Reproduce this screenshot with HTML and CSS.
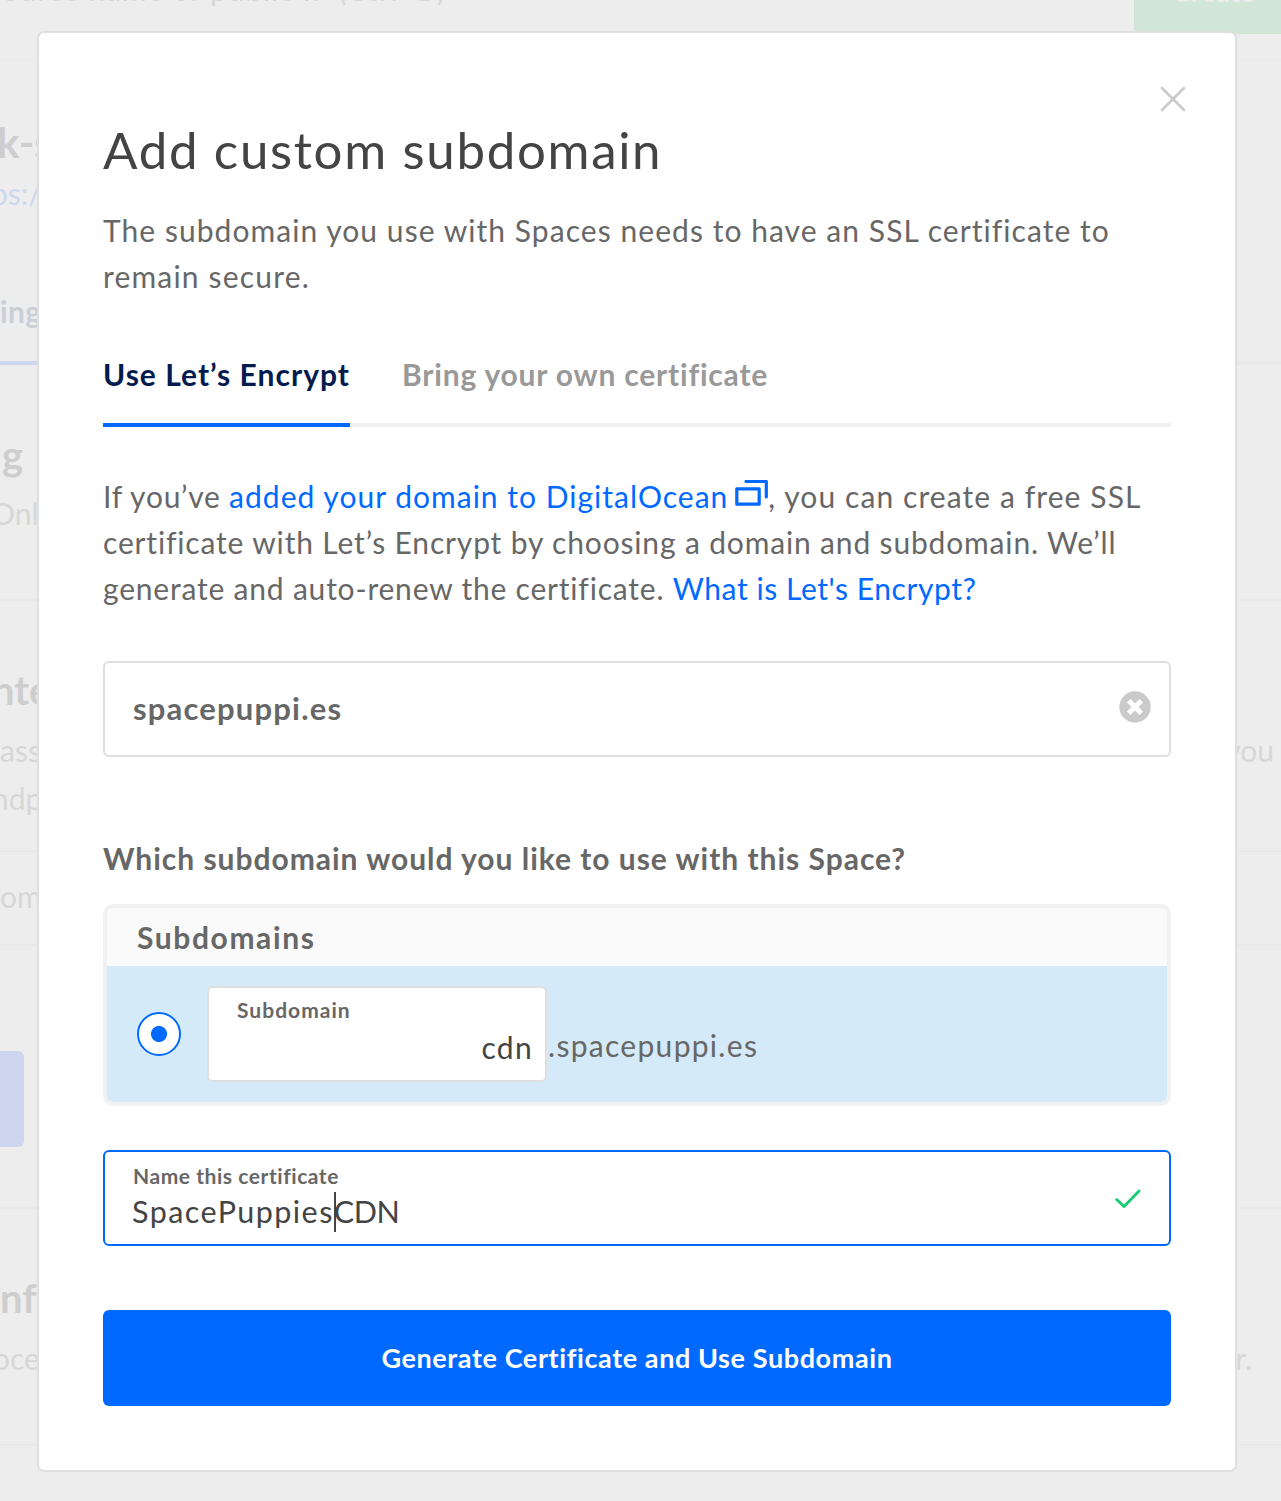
FILE: index.html
```html
<!DOCTYPE html>
<html lang="en">
<head>
<meta charset="utf-8">
<title>Add custom subdomain</title>
<link rel="stylesheet" href="styles.css">
</head>
<body>
<div class="page" aria-hidden="true">
  <header class="topbar"><span class="search">resource name or public IP (Ctrl+B)</span><span class="create">Create</span></header>
  <section class="space-head"><h2 class="bg-name">k-s</h2><p class="bg-url">ps://</p><span class="bg-tab">ings</span></section>
  <section class="listing"><h3>g</h3><p class="cut-o">Only</p></section>
  <section class="endpoint"><h3 class="cut-n">nte</h3><div class="bg-row"><p>asse</p><p>you</p></div><p class="cut-n">ndpo</p></section>
  <section class="domain"><p>oma</p></section>
  <section class="action"><span class="bg-button"></span></section>
  <section class="config"><h3>nfi</h3><div class="bg-row"><p class="cut-p">oces</p><p class="tail">r.</p></div></section>
</div>

<main class="modal" role="dialog">
  <svg class="close" viewBox="0 0 26 26"><path d="M2 2 24 24M24 2 2 24"/></svg>
  <h1><span class="t-title">Add custom subdomain</span></h1>
  <p class="intro"><span class="i1">The subdomain you use with Spaces needs to have an SSL certificate to</span><br><span class="i2">remain secure.</span></p>
  <nav class="tabs"><a class="tab active"><span class="tb1">Use Let’s Encrypt</span></a><a class="tab"><span class="tb2">Bring your own certificate</span></a></nav>
  <p class="info"><span class="n1">If you’ve </span><a class="n2">added your domain to DigitalOcean</a><svg class="ext" viewBox="0 0 33 27"><path d="M1.8 8.8h22.4v15.4H1.8zM11 1.5h20.3V17"/></svg><span class="n3">, you can create a free SSL</span><br><span class="n4">certificate with Let’s Encrypt by choosing a domain and subdomain. We’ll</span><br><span class="n5">generate and auto-renew the certificate. </span><a class="n6">What is Let's Encrypt?</a></p>
  <div class="field domain-field"><span class="dom">spacepuppi.es</span><svg class="clear" viewBox="0 0 32 32"><circle cx="16" cy="16" r="15.7"/><path d="M9.7 9.7 22.3 22.3M22.3 9.7 9.7 22.3"/></svg></div>
  <h2 class="question"><span class="q">Which subdomain would you like to use with this Space?</span></h2>
  <div class="group">
    <div class="group-head"><span class="gh">Subdomains</span></div>
    <div class="option"><span class="radio"></span><div class="sub"><span class="lab1">Subdomain</span><span class="cdn">cdn</span></div><span class="suffix">.spacepuppi.es</span></div>
  </div>
  <div class="field cert"><div class="cert-text"><span class="lab2">Name this certificate</span><div class="value"><span class="v1">SpacePuppies</span><i class="caret"></i><span class="v2">CDN</span></div></div><svg class="check" viewBox="0 0 26 20"><path d="M1.7 10.5 9 17.5 24 2"/></svg></div>
  <button class="submit"><span class="sb">Generate Certificate and Use Subdomain</span></button>
</main>
</body>
</html>
```
FILE: styles.css
```css
*{box-sizing:border-box;margin:0;padding:0}
body{width:1281px;height:1501px;overflow:hidden;position:relative;background:#ededed;font-family:Lato,"Open Sans",sans-serif;font-size:30px;line-height:46px;color:#676767;font-variant-ligatures:none}

/* Dimmed page behind the dialog */
.page{height:1501px;overflow:hidden;color:#d7d7d7;white-space:nowrap}
.page h2,.page h3{color:#cecece;font-weight:700}
.page section{border-bottom:2px solid #e9e9e9}
.topbar{height:60px;border-bottom:2px solid #ebebeb;display:flex;justify-content:space-between}
.search{margin:-34px 0 0 -40px;letter-spacing:.85px}
.create{width:147px;height:69px;margin-top:-35px;padding:3px 0 0 38px;background:#d2e6d8;color:#ededed;font-weight:700;font-size:28px;line-height:46px;border-radius:0 0 0 4px}
.page .space-head{height:305px;border-bottom-width:4px}
.bg-name{font-size:42px;line-height:50px;padding-top:57px;margin-left:-3px}
.bg-url{color:#cdd8ef;margin:3px 0 0 -9px}
.bg-tab{display:block;width:38px;overflow:hidden;margin-top:72px;height:77px;border-bottom:4px solid #cdd8ef;color:#c9ced8;font-weight:700;letter-spacing:.3px}
.listing{height:236px;padding-top:67px}
.page h3{font-size:40px}
.listing h3{margin-left:2px}
.listing p{margin-top:12px}
.cut-o{margin-left:-9px}
.endpoint{height:251px;padding-top:66px}
.cut-n{margin-left:-8px}
.bg-row{display:flex;justify-content:space-between;padding-right:7px;margin-top:14px}
.endpoint p.cut-n{margin-top:2px}
.domain{height:94px;padding-top:21px}
.action{height:263px;padding-top:105px}
.bg-button{display:block;width:24px;height:96px;background:#cdd6ee;border-radius:0 6px 6px 0}
.config{height:237px;padding-top:66px}
.config .bg-row{margin-top:14px}
.tail{margin-right:22px}
.cut-p{margin-left:-7px}

/* Dialog */
.modal{position:absolute;left:37px;top:31px;width:1200px;height:1441px;padding:87px 64px 0;background:#fff;border:2px solid #dfdfdf;border-radius:7px;white-space:nowrap}
.modal span,.modal a{white-space:pre}
.close{position:absolute;right:49px;top:53px;width:26px;height:26px;fill:none;stroke:#cacaca;stroke-width:2.6;stroke-linecap:round}
h1{font-size:51px;line-height:60px;font-weight:400;color:#444}
.t-title{letter-spacing:1.68px}
.intro{margin-top:27px}
.i1{letter-spacing:1.05px}
.i2{letter-spacing:1.18px}

.tabs{display:flex;gap:52px;margin-top:52px;height:76px;border-bottom:4px solid #f1f1f1;font-weight:700}
.tab{height:76px;color:#999}
.active{width:247px;color:#031b4e;border-bottom:4px solid #0069ff}
.tb1{letter-spacing:1.02px}
.tb2{letter-spacing:.8px}

.info{margin-top:46px}
.info a{color:#0069ff}
.n1{letter-spacing:.75px}
.n2{letter-spacing:1.02px}
.n3{letter-spacing:1.08px}
.n4{letter-spacing:.84px}
.n5{letter-spacing:.8px}
.n6{letter-spacing:.57px}
.ext{width:33px;height:27px;margin:0 0 0 7px;vertical-align:1px;fill:none;stroke:#0069ff;stroke-width:3.2;stroke-linejoin:round;stroke-linecap:round}

.field{height:96px;border:2px solid #dfdfdf;border-radius:6px;display:flex;align-items:center;justify-content:space-between}
.domain-field{margin-top:50px;padding:0 18px 0 28px;font-weight:700}
.dom{font-size:31px;letter-spacing:1.18px;margin-top:-3px}
.clear{width:32px;height:32px;margin-top:-4px;fill:#cacaca;stroke:#fff;stroke-width:5}
.clear circle{stroke:none}

.question{margin-top:78px;font-size:30px;font-weight:700}
.q{letter-spacing:.98px}
.group{margin-top:23px;height:202px;border:4px solid #f1f1f1;border-radius:10px;overflow:hidden}
.group-head{height:58px;background:#fafafa;padding:6px 30px;font-weight:700}
.gh{letter-spacing:1.6px}
.option{height:136px;background:#d5eaf8;display:flex;align-items:center;padding-left:30px}
.radio{width:44px;height:44px;border:2px solid #0069ff;border-radius:50%;background:radial-gradient(circle,#0069ff 7.6px,#fff 8.4px)}
.sub{width:340px;height:96px;margin-left:26px;border:2px solid #dfdfdf;border-radius:6px;background:#fff;padding:7px 12px 0 28px;display:flex;flex-direction:column}
.lab1,.lab2{font-size:21px;line-height:30px;font-weight:700;align-self:flex-start}
.lab1{letter-spacing:1.02px}
.lab2{letter-spacing:.55px}
.cdn{align-self:flex-end;color:#444;margin-top:-1px;letter-spacing:1.3px}
.suffix{margin-top:21px;margin-left:1px;letter-spacing:1.3px}

.cert{margin-top:44px;border-color:#0069ff;padding:0 28px}
.cert-text{display:flex;flex-direction:column;margin-top:-4px}
.value{display:flex;align-items:center;color:#444;font-size:30.5px;line-height:40px;margin-left:-1px}
.v1{letter-spacing:1.45px}
.v2{margin-left:-2px;letter-spacing:-.4px}
.v1,.v2{margin-top:-1px}
.caret{width:2px;height:40px;background:#444;position:relative;top:1px}
.check{width:26px;height:20px;fill:none;stroke:#15cd72;stroke-width:2.8;stroke-linecap:round;stroke-linejoin:round;margin-top:1px}
.submit{display:block;width:1068px;height:96px;margin-top:64px;border:0;border-radius:6px;background:#0069ff;color:#fff;font:700 27px/40px Lato,sans-serif}
.sb{letter-spacing:.6px}
```
